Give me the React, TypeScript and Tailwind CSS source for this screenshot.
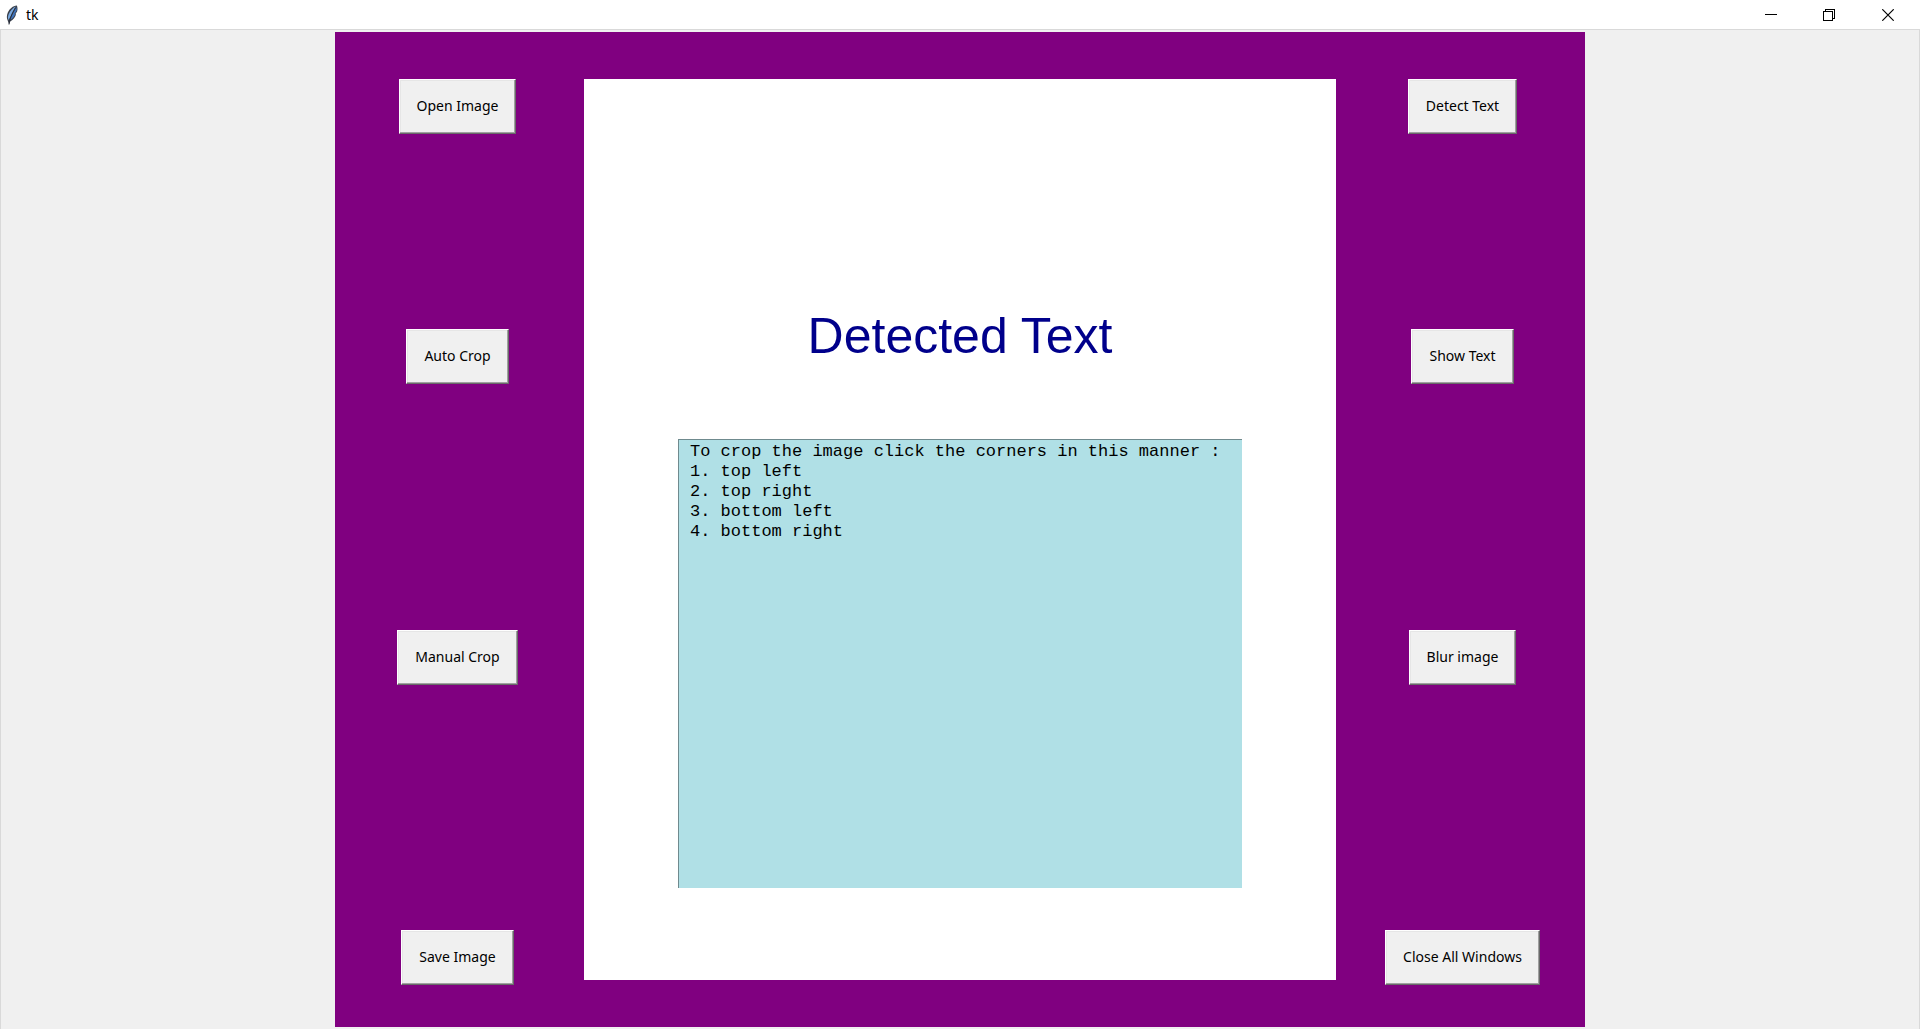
import { useState } from "react";

const INSTRUCTIONS = [
  "To crop the image click the corners in this manner :",
  "1. top left",
  "2. top right",
  "3. bottom left",
  "4. bottom right",
].join("\n");

function FeatherIcon() {
  return (
    <svg width="12" height="20" viewBox="0 0 12 20" aria-hidden="true">
      <path d="M10.8 0.4C7 0.6 3.6 3.5 1.8 7.5C0.5 10.5 0.6 13.5 1.7 15.6L3 19.6L4.2 16.4C7.5 14.8 9.2 12.2 9.9 9.8L9.6 8.8L11.1 6.6C11.8 4.5 11.6 2 10.8 0.4Z" fill="#3a404c" />
      <path d="M9.8 1.4C6.6 2.6 4 6 2.6 9.5C1.8 11.5 1.8 13.5 2.5 15C5 10.5 7 6 9.8 1.4Z" fill="#79a9e0" />
      <path d="M10.4 2.2C8.2 6 6 10.5 3.7 15C6.6 13.6 8.3 11.5 9 9.2L8.5 8.7L10.3 6.2C10.8 4.8 10.8 3.3 10.4 2.2Z" fill="#3f74bd" />
      <path d="M9.4 2.8C7 6.5 4.6 11 3 19.5" stroke="#1d2330" strokeWidth="0.8" fill="none" />
    </svg>
  );
}

function TitleBar() {
  return (
    <header className="flex h-[29px] items-center justify-between bg-white">
      <div className="flex items-center gap-2 pl-1.5">
        <FeatherIcon />
        <h1 className="font-['Noto_Sans'] text-sm leading-5 text-black">tk</h1>
      </div>
      <div className="flex h-full text-black">
        <button type="button" aria-label="Minimize" className="flex w-[62px] items-center justify-center">
          <svg width="12" height="12" viewBox="0 0 12 12" shapeRendering="crispEdges">
            <path d="M0 5.5H12" stroke="currentColor" />
          </svg>
        </button>
        <button type="button" aria-label="Restore" className="flex w-[54px] items-center justify-center">
          <svg width="12" height="12" viewBox="0 0 12 12" fill="none" shapeRendering="crispEdges">
            <path d="M0.5 2.5H9.5V11.5H0.5ZM2.5 2.5V0.5H11.5V9.5H9.5" stroke="currentColor" />
          </svg>
        </button>
        <button type="button" aria-label="Close" className="flex w-16 items-center justify-center">
          <svg width="12" height="12" viewBox="0 0 12 12">
            <path d="M0.3 0.3L11.7 11.7M11.7 0.3L0.3 11.7" stroke="currentColor" strokeWidth="1.2" />
          </svg>
        </button>
      </div>
    </header>
  );
}

function RaisedButton({ label }: { label: string }) {
  return (
    <button
      type="button"
      className="h-[55px] border border-t-white border-r-[#696969] border-b-[#696969] border-l-white bg-[#f0f0f0] px-[17px] pb-0.5 font-['Noto_Sans'] text-sm leading-5 whitespace-nowrap text-black shadow-[inset_-1px_-1px_0_#a0a0a0,inset_1px_1px_0_#e6e6e6]"
    >
      {label}
    </button>
  );
}

function ButtonColumn({ labels }: { labels: string[] }) {
  return (
    <nav className="grid grid-rows-[250px_301px_300px_auto] items-start justify-items-center">
      {labels.map((label) => (
        <RaisedButton key={label} label={label} />
      ))}
    </nav>
  );
}

export default function App() {
  const [text, setText] = useState(INSTRUCTIONS);
  return (
    <div className="flex min-h-screen flex-col bg-[#f0f0f0]">
      <TitleBar />
      <div className="flex-1 border-x border-t border-[#d9d9d9] px-1 pt-0.5">
        <main className="mx-auto grid max-w-[1250px] grid-cols-[245px_1fr_245px] items-start bg-[#800080] pt-[47px] pb-[42px]">
          <ButtonColumn labels={["Open Image", "Auto Crop", "Manual Crop", "Save Image"]} />
          <section className="mx-1 flex flex-col items-center bg-white px-[94px] pt-[227px] pb-[92px]">
            <h2 id="detected" className="font-['Liberation_Sans'] text-[50px] leading-[60px] text-[#00008b]">
              Detected Text
            </h2>
            <textarea
              aria-labelledby="detected"
              spellCheck={false}
              value={text}
              onChange={(e) => setText(e.target.value)}
              className="mt-[73px] block h-[449px] w-full resize-none border-t border-l border-[#6f8a8e] bg-[#b0e0e6] px-[11px] py-0.5 font-['Liberation_Mono'] text-[17px] leading-5 text-black outline-none"
            />
          </section>
          <ButtonColumn labels={["Detect Text", "Show Text", "Blur image", "Close All Windows"]} />
        </main>
      </div>
    </div>
  );
}
